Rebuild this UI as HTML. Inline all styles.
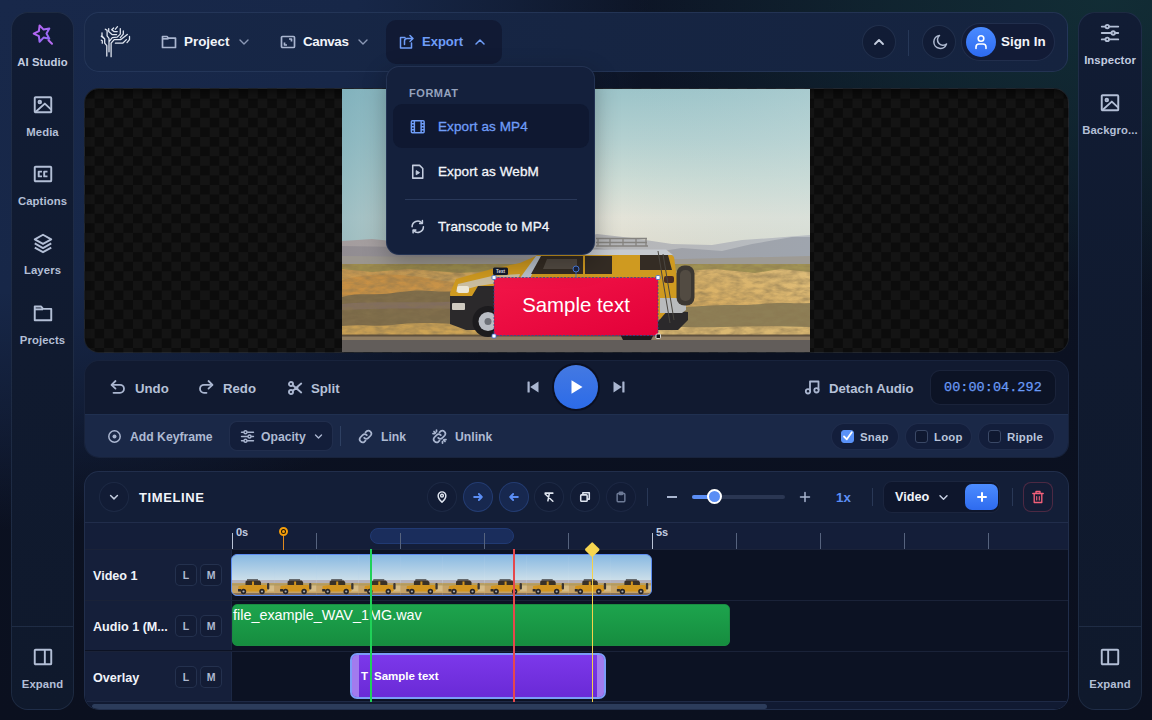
<!DOCTYPE html>
<html lang="en">
<head>
<meta charset="utf-8">
<title>Video Editor</title>
<style>
*{box-sizing:border-box;margin:0;padding:0}
html,body{width:1152px;height:720px;overflow:hidden}
body{font-family:"Liberation Sans",sans-serif;font-weight:700;color:#e6ebf5;position:relative;
background:
 radial-gradient(ellipse 470px 300px at 96% 0%,rgba(18,46,54,.95) 0%,rgba(18,46,54,.6) 45%,rgba(18,46,54,0) 100%),
 radial-gradient(ellipse 650px 530px at 0% 0%,#18284a 0%,#172748 55%,rgba(23,39,72,.55) 78%,rgba(23,39,72,0) 100%),
 linear-gradient(180deg,#0d1526 0%,#0b1121 50%,#0b101f 100%);}
.abs{position:absolute}
.panel{position:absolute;border:1px solid rgba(120,150,200,.14);border-radius:15px}
svg{display:block}
/* sidebars */
.side{background:linear-gradient(180deg,#111c34 0%,#101a2f 50%,#0f192c 100%);left:11px;top:12px;width:63px;height:698px;border-radius:17px}
.side.r{left:1078px;width:64px}
.side.r .sitem{width:62px}
.sitem{position:absolute;left:0;width:61px;text-align:center;font-size:11.3px;color:#b3bfd6;letter-spacing:.1px}
.sitem svg{margin:0 auto 10px}
.sdiv{position:absolute;left:0;right:0;top:613px;height:1px;background:rgba(120,150,200,.16)}
/* header */
#hdr{left:84px;top:12px;width:984px;height:60px;background:linear-gradient(90deg,#172747,#15233f)}
.mbtn{position:absolute;top:7px;height:44px;border-radius:10px;font-size:13.4px;color:#f1f4fa;display:flex;align-items:center}
.circ{position:absolute;border-radius:50%;border:1px solid rgba(130,160,210,.14);background:rgba(14,22,44,.55)}
/* dropdown */
#dd{left:386px;top:66px;width:209px;height:189px;background:#14203c;border-radius:13px;border:1px solid rgba(120,150,200,.16);box-shadow:0 8px 24px rgba(0,0,0,.3)}
.ddi{position:absolute;left:6px;width:196px;height:44px;border-radius:9px;font-size:13.5px;font-weight:400;color:#f3f5fa}
.ddi span{position:absolute;left:45px;top:15px;letter-spacing:.1px;-webkit-text-stroke:.3px currentColor}
.ddi svg{position:absolute;left:17px;top:14.500px;width:15.500px;height:15.500px}
/* canvas */
#cv{left:84px;top:88px;width:985px;height:265px;overflow:hidden;border-radius:15px;
 background:repeating-conic-gradient(#141414 0% 25%,#0c0c0c 0% 50%) 0 0/19.2px 19.2px;box-shadow:inset 0 6px 8px -4px rgba(0,0,0,.6)}
/* controls */
#ctl{left:84px;top:360px;width:985px;height:98px;background:#111a30;overflow:hidden;border-color:rgba(120,150,200,.08)}
#ctl2{position:absolute;left:0;right:0;top:53px;bottom:0;background:#1a2847;border-top:1px solid rgba(120,150,200,.07)}
.tb{position:absolute;margin-top:1.5px;font-size:13.2px;color:#b6c1d8;white-space:nowrap}
.tb2{position:absolute;margin-top:.5px;font-size:12.2px;color:#aebad2;white-space:nowrap}
.pill{position:absolute;height:27px;border-radius:14px;background:#131e3b;border:1px solid rgba(120,150,200,.12);font-size:11.4px;color:#b9c4da}
.pill i{position:absolute;left:9px;top:6px;width:13px;height:13px;border-radius:3px;border:1.5px solid #3a4866;background:#0f1830}
.pill span{position:absolute;left:28px;top:6.500px;letter-spacing:.2px}
/* timeline */
#tl{left:84px;top:471px;width:985px;height:239px;background:#131e37;overflow:hidden}
.tc{position:absolute;width:30px;height:30px;border-radius:50%;border:1px solid rgba(130,160,210,.1);background:#121c35;top:10px}
.tc svg{position:absolute;left:8px;top:8px;width:12px;height:12px}
.trk{position:absolute;left:0;width:985px;border-top:1px solid rgba(120,150,200,.13)}
.trkh{position:absolute;left:0;top:0;width:147px;height:100%;background:#151f3a;border-right:1px solid rgba(120,150,200,.08)}
.trkh b{position:absolute;left:8px;top:19px;font-size:12.6px;color:#f0f3f9;white-space:nowrap}
.lm{position:absolute;top:14px;width:22px;height:22px;border-radius:5px;border:1px solid rgba(130,160,210,.16);background:#131c35;font-size:10.5px;color:#aeb9d0;text-align:center;line-height:20px}
.tick{position:absolute;top:64px;width:1px;height:14px;background:#5d6b86}
</style>
</head>
<body>

<!-- LEFT SIDEBAR -->
<div class="panel side" id="ls">
  <div class="sitem" style="top:11px;color:#c3cde0">
    <svg width="22" height="22" viewBox="0 0 22 22" fill="none" stroke-width="2" stroke-linecap="round" stroke-linejoin="round"><defs><linearGradient id="stg" x1="0" y1="0" x2="1" y2="1"><stop offset="0" stop-color="#c264f2"/><stop offset="1" stop-color="#8a6cf7"/></linearGradient></defs><path d="M7.6 1.4 11.6 5.6 17.3 4.5 14.5 9.6 17.3 14.7 11.6 13.6 7.6 17.8 6.9 12.1 1.7 9.6 6.9 7.1z" stroke="url(#stg)"/><path d="M16.500 16.200l3.500 3.600" stroke="#b56bf0"/></svg>
    AI Studio</div>
  <div class="sitem" style="top:81px">
    <svg width="22" height="22" viewBox="0 0 24 24" fill="none" stroke="#b3bfd6" stroke-width="2.100" stroke-linejoin="round"><rect x="3" y="3.500" width="18" height="16.500" rx="1"/><circle cx="8.500" cy="8.800" r="1.400"/><path d="M3.800 19.600 14 10.500l7 6.500"/></svg>
    Media</div>
  <div class="sitem" style="top:150px">
    <svg width="22" height="22" viewBox="0 0 24 24" fill="none" stroke="#b3bfd6" stroke-width="2.100"><rect x="3" y="4" width="18" height="16" rx="1"/><path d="M10.900 9.400H7.300v5.200h3.600M16.900 9.400h-3.600v5.200h3.600" stroke-linejoin="round"/></svg>
    Captions</div>
  <div class="sitem" style="top:219px">
    <svg width="22" height="22" viewBox="0 0 24 24" fill="none" stroke="#b3bfd6" stroke-width="2.100" stroke-linejoin="round"><path d="M12 3l9 5-9 5-9-5z"/><path d="M3 12.500l9 5 9-5"/><path d="M3 17l9 5 9-5"/></svg>
    Layers</div>
  <div class="sitem" style="top:289px">
    <svg width="22" height="22" viewBox="0 0 24 24" fill="none" stroke="#b3bfd6" stroke-width="2.100" stroke-linejoin="round"><path d="M3 5h7l2 2.500h9v12.500h-18z"/><path d="M3 8h9"/></svg>
    Projects</div>
  <div class="sdiv"></div>
  <div class="sitem" style="top:633px">
    <svg width="22" height="22" viewBox="0 0 24 24" fill="none" stroke="#b3bfd6" stroke-width="2.100"><rect x="3" y="4" width="18" height="16" rx="1"/><path d="M14 4v16"/></svg>
    Expand</div>
</div>

<!-- RIGHT SIDEBAR -->
<div class="panel side r" id="rs">
  <div class="sitem" style="top:9px;color:#c3cde0">
    <svg width="22" height="22" viewBox="0 0 24 24" fill="none" stroke="#b3bfd6" stroke-width="2" stroke-linecap="round"><path d="M3 5h18M3 12h18M3 19h18"/><circle cx="9" cy="5" r="1.900" fill="#111a31"/><circle cx="15.500" cy="12" r="1.900" fill="#111a31"/><circle cx="9" cy="19" r="1.900" fill="#111a31"/></svg>
    Inspector</div>
  <div class="sitem" style="top:79px">
    <svg width="22" height="22" viewBox="0 0 24 24" fill="none" stroke="#b3bfd6" stroke-width="2.100" stroke-linejoin="round"><rect x="3" y="3.500" width="18" height="16.500" rx="1"/><circle cx="8.500" cy="8.800" r="1.400"/><path d="M3.800 19.600 14 10.500l7 6.500"/></svg>
    Backgro...</div>
  <div class="sdiv"></div>
  <div class="sitem" style="top:633px">
    <svg width="22" height="22" viewBox="0 0 24 24" fill="none" stroke="#b3bfd6" stroke-width="2.100"><rect x="3" y="4" width="18" height="16" rx="1"/><path d="M10 4v16"/></svg>
    Expand</div>
</div>

<!-- HEADER -->
<div class="panel" id="hdr">

  <svg class="abs" style="left:9px;top:7px" width="44" height="44" viewBox="0 0 44 44" fill="none" stroke="#dde3ee" stroke-width="1.300" stroke-linecap="round" stroke-linejoin="round">
    <path d="M12.800 36V25.700L10.700 23.200V19L8 15.900V12.800M15 31.800V18.300L13.100 15.900V10.400L11.300 9.200M17.100 36.700V23.200L20.200 19.600H26.900L33.300 14.400M15.300 21.400 18.300 17.700 23.200 17.100 26.300 14.100V8.600M21.400 23.200H28.700L32.400 19.600M33 22.600 35.500 19.600V16.500M14.700 8.600V11.600L18.300 14.700H22.600M19.600 8 17.700 9.800 20.200 11.600H23.200M21.400 9.200 23.500 6.700M26.300 17.700 29.300 14.100V11M7.300 20.200 8.300 20.800V23.200M7.300 16.200 9.800 18.300"/>
  </svg>
  <div class="mbtn" style="left:66px;width:110px">
    <svg class="abs" style="left:10px;top:14px" width="16" height="16" viewBox="0 0 16 16" fill="none" stroke="#aab6d0" stroke-width="1.700" stroke-linejoin="round"><path d="M1.500 2.500h4.500l1.500 1.700h7v9.300h-13z"/><path d="M1.500 4.800h6"/></svg>
    <span class="abs" style="left:33px;top:14px">Project</span>
    <svg class="abs" style="left:88px;top:17px" width="10" height="10" viewBox="0 0 10 10" fill="none" stroke="#8b98b5" stroke-width="1.400" stroke-linecap="round" stroke-linejoin="round"><path d="M1 3l4 4 4-4"/></svg>
  </div>
  <div class="mbtn" style="left:185px;width:110px">
    <svg class="abs" style="left:10px;top:14px" width="16" height="16" viewBox="0 0 16 16" fill="none" stroke="#aab6d0" stroke-width="1.700" stroke-linejoin="round"><rect x="1.500" y="2.500" width="13" height="11" rx="1"/><path d="M4.500 8.500v2.500h2.500M11.500 7.500V5h-2.500"/></svg>
    <span class="abs" style="left:33px;top:14px;letter-spacing:-.35px">Canvas</span>
    <svg class="abs" style="left:88px;top:17px" width="10" height="10" viewBox="0 0 10 10" fill="none" stroke="#8b98b5" stroke-width="1.400" stroke-linecap="round" stroke-linejoin="round"><path d="M1 3l4 4 4-4"/></svg>
  </div>
  <div class="mbtn" style="left:301px;width:116px;background:#111a34;color:#6f9df8">
    <svg class="abs" style="left:12px;top:13px" width="17" height="17" viewBox="0 0 17 17" fill="none" stroke="#6f9df8" stroke-width="1.500" stroke-linejoin="round" stroke-linecap="round"><path d="M7 4.500H2.500v10.500h11v-5"/><path d="M6.500 11.500V8a2.500 2.500 0 0 1 2.500-2.500h5.500M12 2.500l3 3-3 3"/></svg>
    <span class="abs" style="left:36px;top:14px;font-size:13px">Export</span>
    <svg class="abs" style="left:89px;top:17px" width="10" height="10" viewBox="0 0 10 10" fill="none" stroke="#6f9df8" stroke-width="1.500" stroke-linecap="round" stroke-linejoin="round"><path d="M1 7l4-4 4 4"/></svg>
  </div>
  <div class="circ" style="left:777px;top:12px;width:34px;height:34px"><svg class="abs" style="left:10px;top:10px" width="12" height="12" viewBox="0 0 12 12" fill="none" stroke="#c5cee0" stroke-width="1.800" stroke-linecap="round" stroke-linejoin="round"><path d="M2 8l4-4 4 4"/></svg></div>
  <div class="abs" style="left:823px;top:17px;width:1px;height:26px;background:rgba(130,160,210,.16)"></div>
  <div class="circ" style="left:837px;top:12px;width:34px;height:34px"><svg class="abs" style="left:9px;top:8px" width="16" height="16" viewBox="0 0 16 16" fill="none" stroke="#aeb9d0" stroke-width="1.500" stroke-linejoin="round"><path d="M7.500 1.500a6.500 6.500 0 1 0 7 8.500 5.200 5.200 0 0 1-7-8.500z"/></svg></div>
  <div class="abs" style="left:876px;top:10px;width:94px;height:38px;border-radius:19px;background:#121b36;border:1px solid rgba(130,160,210,.14)">
    <div class="abs" style="left:4px;top:3px;width:30px;height:30px;border-radius:50%;background:linear-gradient(180deg,#4a8bff,#2d6af0)"></div>
    <svg class="abs" style="left:11px;top:9px" width="16" height="18" viewBox="0 0 16 18" fill="none" stroke="#fff" stroke-width="1.600" stroke-linejoin="round" stroke-linecap="round"><circle cx="8" cy="5.500" r="2.800"/><path d="M3 15.500v-1.500a3 3 0 0 1 3-3h4a3 3 0 0 1 3 3v1.500"/></svg>
    <span class="abs" style="left:39px;top:10px;font-size:13.4px;color:#f1f4fa">Sign In</span>
  </div>
</div>

<!-- CANVAS -->
<div class="panel" id="cv">

  <svg class="abs" style="left:257px;top:-1px" width="468" height="266" viewBox="0 0 468 266">
    <defs>
      <linearGradient id="sky" x1="0" y1="0" x2="0" y2="1"><stop offset="0" stop-color="#9cc4c9"/><stop offset=".28" stop-color="#b3d0d0"/><stop offset=".52" stop-color="#cddcd5"/><stop offset=".72" stop-color="#e3e3d8"/><stop offset="1" stop-color="#dcd8c9"/></linearGradient>
      <linearGradient id="skyx" x1="0" y1="0" x2="1" y2="0"><stop offset="0" stop-color="#6fa5b4" stop-opacity=".6"/><stop offset=".4" stop-color="#8fbcc6" stop-opacity=".1"/><stop offset=".6" stop-color="#a5c8d0" stop-opacity="0"/><stop offset="1" stop-color="#c4dadc" stop-opacity=".3"/></linearGradient>
      <linearGradient id="gnd" x1="0" y1="0" x2="0" y2="1"><stop offset="0" stop-color="#d0b171"/><stop offset=".3" stop-color="#dbb469"/><stop offset=".55" stop-color="#d1a65b"/><stop offset="1" stop-color="#b59555"/></linearGradient>
      <linearGradient id="gndx" x1="0" y1="0" x2="1" y2="0"><stop offset="0" stop-color="#b9782c" stop-opacity=".45"/><stop offset=".5" stop-color="#c8913f" stop-opacity=".15"/><stop offset="1" stop-color="#e6c684" stop-opacity=".45"/></linearGradient>
      <linearGradient id="red" x1="0" y1="0" x2="1" y2="1"><stop offset="0" stop-color="#f21648"/><stop offset="1" stop-color="#e30039"/></linearGradient>
      <filter id="nz" x="0" y="0" width="100%" height="100%"><feTurbulence type="fractalNoise" baseFrequency=".09 .22" numOctaves="3" seed="7"/><feColorMatrix values="0 0 0 0 .25  0 0 0 0 .18  0 0 0 0 .08  .9 .9 .9 0 -1.050"/></filter>
      <filter id="nz2" x="0" y="0" width="100%" height="100%"><feTurbulence type="fractalNoise" baseFrequency=".06 .3" numOctaves="2" seed="3"/><feColorMatrix values="0 0 0 0 .95  0 0 0 0 .82  0 0 0 0 .55  .8 .8 .8 0 -1"/></filter>
    </defs>
    <rect width="468" height="180" fill="url(#sky)"/>
    <rect width="468" height="160" fill="url(#skyx)"/>
    <!-- mountains -->
    <linearGradient id="mt1" x1="0" y1="0" x2="1" y2="0"><stop offset="0" stop-color="#a39c9d"/><stop offset=".45" stop-color="#b3b2b3"/><stop offset="1" stop-color="#b9bec3"/></linearGradient>
    <linearGradient id="mt2" x1="0" y1="0" x2="1" y2="0"><stop offset="0" stop-color="#918c91"/><stop offset=".45" stop-color="#a09fa3"/><stop offset="1" stop-color="#9fa5ae"/></linearGradient>
    <path d="M0 153 30 151 60 154 100 155 140 158 200 159 255 146 290 150 330 156 370 157 400 152 430 150 468 147V180H0z" fill="url(#mt1)"/>
    <path d="M0 158 60 159 130 163 200 166 255 160 300 166 340 160 380 163 410 156 450 149 468 149V182H0z" fill="url(#mt2)"/>
    <path d="M0 168 100 169 250 172 340 171 468 168V182H0z" fill="#9d988f" opacity=".8"/>
    <!-- ground -->
    <rect y="176" width="468" height="90" fill="url(#gnd)"/>
    <rect y="176" width="468" height="74" fill="url(#gndx)"/>
    <path d="M0 176h468v8l-30-3-25 4-40-4-45 3-40-3-60 4-50-4-60 4-50-4-38 3-30-3z" fill="#938b4c" opacity=".8"/>
    <path d="M0 192c30-8 60-6 90-1s50 8 80 4 40-8 60-4v22H0z" fill="#c4853a" opacity=".5"/>
    <path d="M0 209c12-4 25-2 40-3s30-5 50-3 35-2 50 1 40 0 60 4 30 5 50 6v28H0z" fill="#776749" opacity=".95"/>
    <path d="M0 216c30-3 60-1 100-2s70 3 120 5v5c-60-3-150-5-220-2z" fill="#8d7286" opacity=".35"/>
    <path d="M300 222c20-4 40-2 60-4s40 0 60-2 30 0 48-1v26H300z" fill="#8a7c55" opacity=".95"/>
    <path d="M0 238c20-2 35 1 50-1s35-3 60-1 50 0 70 1 40 1 60 3v9H0z" fill="#cfa556" opacity=".9"/>
    <path d="M300 240c30-2 50 0 80-1s60-1 88 0v10H300z" fill="#dab873" opacity=".95"/>
    <rect y="176" width="468" height="74" filter="url(#nz)" opacity=".7"/>
    <rect y="247.500" width="468" height="6" fill="#8f7d63"/>
    <rect y="252" width="468" height="14" fill="#625d5a"/>
    <rect y="246.500" width="468" height="2" fill="#4d4234" opacity=".8"/>
    <!-- car -->
    <g>
      <path d="M254 150.500h51M254 154.500h51M254 158h52M256 150.500v8M268 150.500v8M281 150.500v8M294 150.500v8M304 150.500v8" stroke="#85837f" stroke-width="1.300" fill="none"/>
      <path d="M194 168l4-5h128l6 6 3 22 1 34-8 6H124l-14-4-2-22 6-14 36-10 28-6z" fill="#cf9a20"/>
      <path d="M196 164.500l4-3h124l7 5.500H194z" fill="#c6cacf"/>
      <path d="M178 190l16-22h6l-12 22z" fill="#b9c2cc"/>
      <path d="M199 168h42v18h-52zM243 168h27v18h-27zM298 167h28l4 15h-32z" fill="#342c24"/>
      <path d="M205 171h30v10h-34z" fill="#6d665c" opacity=".55"/>
      <path d="M116 196l34-8 28-2-2 6-40 6-22 6z" fill="#c9c7c0" opacity=".8"/>
      <path d="M108 208h22l6-10h20l-2 12 10 26h150l12-14 20 2v8l-10 10H124l-16-6z" fill="#2b292b"/>
      <path d="M318 210h26v12l-4 3h-22z" fill="#b9bbbd"/>
      <rect x="334.500" y="177.500" width="18" height="40" rx="8" fill="#3c3732"/>
      <rect x="338" y="182" width="11" height="31" rx="5" fill="#524b42"/>
      <circle cx="146" cy="233.500" r="15.500" fill="#1c1b1e"/><circle cx="146" cy="233.500" r="9.500" fill="#b9bdc4"/><circle cx="146" cy="233.500" r="3.500" fill="#6d7178"/>
      <path d="M279 248a16 16 0 0 1 32 0l-2 4h-28z" fill="#1c1b1e"/>
      <rect x="115" y="198" width="12" height="7" rx="2" fill="#ece7d6"/>
      <rect x="110" y="215" width="13" height="7" rx="1" fill="#cfcac0"/>
      <rect x="322" y="188" width="10" height="7" rx="2" fill="#4a2c22"/>
      <path d="M316 163l12 72M321 166l11 66" stroke="#4a4640" stroke-width="1" fill="none"/>
    </g>
    <!-- text overlay -->
    <rect x="152" y="189.500" width="164" height="58" fill="url(#red)"/>
    <rect x="152" y="189.500" width="164" height="58" fill="none" stroke="#2f4f8f" stroke-width=".8" stroke-dasharray="2 1.500"/>
    <text x="234" y="223.700" text-anchor="middle" font-family="Liberation Sans, sans-serif" font-weight="400" font-size="20.400" fill="#ffffff">Sample text</text>
    <rect x="151" y="179.500" width="15" height="7.500" rx="1.500" fill="#141a2c"/>
    <text x="158.500" y="185.300" text-anchor="middle" font-family="Liberation Sans, sans-serif" font-weight="700" font-size="4.500" fill="#e8ecf5">Text</text>
    <path d="M234 184v6" stroke="#3b6ad0" stroke-width=".8"/>
    <circle cx="234" cy="181" r="3" fill="#1a2440" stroke="#4d7fe0" stroke-width="1"/>
    <g fill="#fff" stroke="#3b6ad0" stroke-width=".8"><rect x="150" y="187.500" width="4" height="4" rx="1"/><rect x="314" y="187.500" width="4" height="4" rx="1"/><rect x="150" y="246" width="4" height="4" rx="1"/></g>
    <rect x="314" y="246" width="4.500" height="4.500" rx="1" fill="#111" stroke="#fff" stroke-width=".8"/>
  </svg>
</div>

<!-- DROPDOWN -->
<div class="abs" id="dd">

  <div class="abs" style="left:22px;top:20px;font-size:11px;letter-spacing:.55px;color:#95a2bd">FORMAT</div>
  <div class="ddi" style="top:37px;background:#0f1831;color:#6f9df8">
    <svg width="17" height="17" viewBox="0 0 17 17" fill="none" stroke="#6f9df8" stroke-width="1.600"><rect x="1.500" y="2" width="14" height="13" rx="1"/><path d="M4.800 2v13M12.200 2v13M1.500 5.300h3.300M1.500 8.500h3.300M1.500 11.700h3.300M12.200 5.300h3.300M12.200 8.500h3.300M12.200 11.700h3.300"/></svg>
    <span>Export as MP4</span>
  </div>
  <div class="ddi" style="top:82px">
    <svg width="17" height="17" viewBox="0 0 17 17" fill="none" stroke="#c3ccde" stroke-width="1.700" stroke-linejoin="round"><path d="M3 1.500h7.500l3.500 3.500v10.500h-11z"/><path d="M6.800 7.200v4.600l3.700-2.300z" fill="#c3ccde" stroke-width="1"/></svg>
    <span>Export as WebM</span>
  </div>
  <div class="abs" style="left:18px;top:132px;width:172px;height:1px;background:rgba(130,160,210,.2)"></div>
  <div class="ddi" style="top:137px">
    <svg width="17" height="17" viewBox="0 0 17 17" fill="none" stroke="#c3ccde" stroke-width="1.700" stroke-linecap="round" stroke-linejoin="round"><path d="M2.300 8.500a6.200 6.200 0 0 1 10.800-4.200M14.700 8.500a6.200 6.200 0 0 1-10.800 4.200"/><path d="M13.600 1.800v3h-3M3.400 15.200v-3h3"/></svg>
    <span>Transcode to MP4</span>
  </div>
</div>

<!-- CONTROLS -->
<div class="panel" id="ctl">
  <div id="ctl2"></div>

  <svg class="abs" style="left:24px;top:17px" width="18" height="18" viewBox="0 0 18 18" fill="none" stroke="#aab6d0" stroke-width="1.800" stroke-linecap="round" stroke-linejoin="round"><path d="M6.500 3l-4 3.800 4 3.800"/><path d="M3 6.800h8a4 4 0 0 1 0 8h-6.500"/></svg>
  <div class="tb" style="left:50px;top:18px">Undo</div>
  <svg class="abs" style="left:112px;top:17px" width="18" height="18" viewBox="0 0 18 18" fill="none" stroke="#aab6d0" stroke-width="1.800" stroke-linecap="round" stroke-linejoin="round"><path d="M11.500 3l4 3.800-4 3.800"/><path d="M15 6.800h-8a4 4 0 0 0 0 8h2.500"/></svg>
  <div class="tb" style="left:138px;top:18px">Redo</div>
  <svg class="abs" style="left:202px;top:19px" width="16" height="16" viewBox="0 0 18 18" fill="none" stroke="#aab6d0" stroke-width="2.100" stroke-linecap="round"><circle cx="4.500" cy="4.500" r="2.300"/><circle cx="4.500" cy="13.500" r="2.300"/><path d="M6.500 6l9.500 8M6.500 12l9.500-8M9 9h3"/></svg>
  <div class="tb" style="left:226px;top:18px">Split</div>

  <svg class="abs" style="left:441px;top:19px" width="14" height="14" viewBox="0 0 14 14" fill="#aab6d0"><rect x="1.500" y="1.500" width="2.200" height="11" rx=".5"/><path d="M12.500 1.500v11l-8.300-5.500z"/></svg>
  <div class="abs" style="left:469px;top:4px;width:44px;height:44px;border-radius:50%;background:linear-gradient(180deg,#4479e2,#2c6be8);box-shadow:0 0 0 2px rgba(8,12,26,.7)"></div>
  <svg class="abs" style="left:484px;top:18px" width="16" height="16" viewBox="0 0 16 16" fill="#fff"><path d="M2.500 1.300v13.400l11-6.700z"/></svg>
  <svg class="abs" style="left:527px;top:19px" width="14" height="14" viewBox="0 0 14 14" fill="#aab6d0"><rect x="10.300" y="1.500" width="2.200" height="11" rx=".5"/><path d="M1.500 1.500v11l8.300-5.500z"/></svg>

  <svg class="abs" style="left:719px;top:17px" width="17" height="18" viewBox="0 0 17 18" fill="none" stroke="#aab6d0" stroke-width="1.800" stroke-linejoin="round"><path d="M6 13V3.500h8.500V12"/><circle cx="4" cy="13.300" r="2.200"/><circle cx="12.500" cy="12.300" r="2.200"/></svg>
  <div class="tb" style="left:744px;top:18px">Detach Audio</div>
  <div class="abs" style="left:845px;top:9px;width:126px;height:35px;border-radius:10px;background:#0c1325;border:1px solid rgba(120,150,200,.13)">
    <span class="abs" style="left:13px;top:9px;font-family:'Liberation Mono',monospace;font-weight:400;font-size:13.500px;color:#6a9af6;letter-spacing:.05px;-webkit-text-stroke:.25px #6a9af6">00:00:04.292</span>
  </div>

  <svg class="abs" style="left:22px;top:68px" width="15" height="15" viewBox="0 0 15 15" fill="none" stroke="#aab6d0" stroke-width="1.500"><circle cx="7.500" cy="7.500" r="5.700"/><circle cx="7.500" cy="7.500" r="2" fill="#aab6d0" stroke="none"/></svg>
  <div class="tb2" style="left:45px;top:68px">Add Keyframe</div>
  <div class="abs" style="left:144px;top:60px;width:104px;height:30px;border-radius:8px;background:#131e3a;border:1px solid rgba(120,150,200,.14)"></div>
  <svg class="abs" style="left:155px;top:68px" width="15" height="15" viewBox="0 0 15 15" fill="none" stroke="#aab6d0" stroke-width="1.400" stroke-linecap="round"><path d="M1.500 3.200h12M1.500 7.500h12M1.500 11.800h12"/><circle cx="5.500" cy="3.200" r="1.500" fill="#131e3a"/><circle cx="9.500" cy="7.500" r="1.500" fill="#131e3a"/><circle cx="5.500" cy="11.800" r="1.500" fill="#131e3a"/></svg>
  <div class="tb2" style="left:176px;top:68px">Opacity</div>
  <svg class="abs" style="left:229px;top:71px" width="9" height="9" viewBox="0 0 9 9" fill="none" stroke="#aab6d0" stroke-width="1.400" stroke-linecap="round" stroke-linejoin="round"><path d="M1.500 3l3 3 3-3"/></svg>
  <div class="abs" style="left:255px;top:65px;width:1px;height:20px;background:rgba(130,160,210,.2)"></div>
  <svg class="abs" style="left:273px;top:68px" width="15" height="15" viewBox="0 0 15 15" fill="none" stroke="#aab6d0" stroke-width="1.750" stroke-linecap="round"><path d="M6.200 8.800a3 3 0 0 0 4.200 0l2.300-2.300a3 3 0 0 0-4.200-4.200l-1 1"/><path d="M8.800 6.200a3 3 0 0 0-4.200 0l-2.300 2.300a3 3 0 0 0 4.200 4.200l1-1"/></svg>
  <div class="tb2" style="left:296px;top:68px">Link</div>
  <svg class="abs" style="left:347px;top:68px" width="15" height="15" viewBox="0 0 15 15" fill="none" stroke="#aab6d0" stroke-width="1.750" stroke-linecap="round"><path d="M6.200 8.800a3 3 0 0 0 4.200 0l2.300-2.300a3 3 0 0 0-4.200-4.200l-1 1"/><path d="M8.800 6.200a3 3 0 0 0-4.200 0l-2.300 2.300a3 3 0 0 0 4.200 4.200l1-1"/><path d="M2 2.500l1.500 1.500M13 12.500l-1.500-1.500M4.500 1v1.500M1 4.500h1.500M10.500 14v-1.500M14 10.500h-1.500"/></svg>
  <div class="tb2" style="left:370px;top:68px">Unlink</div>

  <div class="pill" style="left:746px;top:62px;width:68px"><i style="background:#5a92f8;border-color:#5a92f8"></i><svg class="abs" style="left:10px;top:6px" width="12" height="12" viewBox="0 0 12 12" fill="none" stroke="#fff" stroke-width="1.800" stroke-linecap="round" stroke-linejoin="round"><path d="M2 6.500l2.800 2.800 5-7"/></svg><span>Snap</span></div>
  <div class="pill" style="left:820px;top:62px;width:67px"><i></i><span>Loop</span></div>
  <div class="pill" style="left:893px;top:62px;width:77px"><i></i><span>Ripple</span></div>
</div>

<!-- TIMELINE -->
<div class="panel" id="tl">

  <!-- header row -->
  <div class="tc" style="left:14px"><svg width="14" height="14" viewBox="0 0 14 14" fill="none" stroke="#c5cee0" stroke-width="1.700" stroke-linecap="round" stroke-linejoin="round"><path d="M3 5.200l4 4 4-4"/></svg></div>
  <div class="abs" style="left:54px;top:18px;font-size:13px;letter-spacing:.6px;color:#f1f4fa">TIMELINE</div>

  <div class="tc" style="left:342px"><svg width="14" height="14" viewBox="0 0 14 14" fill="none" stroke="#dfe5f0" stroke-width="1.700" stroke-linejoin="round"><path d="M7 13s4.500-4 4.500-7.500a4.500 4.500 0 0 0-9 0c0 3.500 4.500 7.500 4.500 7.500z"/><circle cx="7" cy="5.500" r="1.600"/></svg></div>
  <div class="tc" style="left:378px;background:#17284f;border-color:rgba(80,130,240,.22)"><svg width="14" height="14" viewBox="0 0 14 14" fill="none" stroke="#5b8ef5" stroke-width="2.200" stroke-linecap="round" stroke-linejoin="round"><path d="M2.500 7h9M8 3.500l3.500 3.500-3.500 3.500"/></svg></div>
  <div class="tc" style="left:414px;background:#17284f;border-color:rgba(80,130,240,.22)"><svg width="14" height="14" viewBox="0 0 14 14" fill="none" stroke="#5b8ef5" stroke-width="2.200" stroke-linecap="round" stroke-linejoin="round"><path d="M11.500 7h-9M6 3.500l-3.500 3.500 3.500 3.500"/></svg></div>
  <div class="tc" style="left:449px"><svg width="14" height="14" viewBox="0 0 14 14" fill="none" stroke="#dfe5f0" stroke-width="1.800" stroke-linecap="round" stroke-linejoin="round"><path d="M2.500 2.500h9M7.500 2.500l-1.800 9M2.500 3.500l9 8.500"/></svg></div>
  <div class="tc" style="left:485px"><svg width="14" height="14" viewBox="0 0 14 14" fill="none" stroke="#dfe5f0" stroke-width="1.800" stroke-linejoin="round"><rect x="2" y="4.500" width="7.500" height="7.500" rx="1"/><path d="M4.500 4.500v-2.500h7.500v7.500h-2.500"/></svg></div>
  <div class="tc" style="left:521px;border-color:rgba(130,160,210,.09)"><svg width="14" height="14" viewBox="0 0 14 14" fill="none" stroke="#6d7a96" stroke-width="1.700" stroke-linejoin="round"><rect x="2.500" y="3" width="9" height="9.500" rx="1"/><rect x="5" y="1.500" width="4" height="2.500" rx=".5" fill="#6d7a96"/></svg></div>
  <div class="abs" style="left:562px;top:16px;width:1px;height:18px;background:rgba(130,160,210,.2)"></div>
  <div class="abs" style="left:582px;top:24px;width:10px;height:1.500px;background:#aab6d0"></div>
  <div class="abs" style="left:607px;top:23px;width:93px;height:4px;border-radius:2px;background:#2a3652"></div>
  <div class="abs" style="left:607px;top:23px;width:22px;height:4px;border-radius:2px;background:#5b8ef5"></div>
  <div class="abs" style="left:622px;top:17px;width:15px;height:15px;border-radius:50%;background:#5b8ef5;border:2px solid #fff"></div>
  <svg class="abs" style="left:714px;top:19px" width="12" height="12" viewBox="0 0 12 12" stroke="#aab6d0" stroke-width="1.500" stroke-linecap="round"><path d="M1.500 6h9M6 1.500v9"/></svg>
  <div class="abs" style="left:751px;top:17px;font-size:13.300px;font-weight:700;color:#5b8ef5;margin-top:.5px">1x</div>
  <div class="abs" style="left:787px;top:16px;width:1px;height:18px;background:rgba(130,160,210,.2)"></div>
  <div class="abs" style="left:798px;top:9px;width:117px;height:32px;border-radius:9px;background:#0e162c;border:1px solid rgba(120,150,200,.12)"></div>
  <div class="abs" style="left:810px;top:17px;font-size:12.700px;font-weight:700;color:#f1f4fa;margin-top:.5px">Video</div>
  <svg class="abs" style="left:853px;top:20px" width="11" height="11" viewBox="0 0 11 11" fill="none" stroke="#c5cee0" stroke-width="1.500" stroke-linecap="round" stroke-linejoin="round"><path d="M2 3.800l3.500 3.500 3.500-3.500"/></svg>
  <div class="abs" style="left:880px;top:12px;width:33px;height:26px;border-radius:7px;background:linear-gradient(180deg,#4c8cff,#2e6bef)"></div>
  <svg class="abs" style="left:891px;top:19px" width="12" height="12" viewBox="0 0 12 12" stroke="#fff" stroke-width="2" stroke-linecap="round"><path d="M2 6h8M6 2v8"/></svg>
  <div class="abs" style="left:927px;top:16px;width:1px;height:18px;background:rgba(130,160,210,.2)"></div>
  <div class="abs" style="left:938px;top:10px;width:30px;height:30px;border-radius:8px;border:1px solid rgba(240,80,110,.26);background:#141c35"></div>
  <svg class="abs" style="left:946px;top:17px" width="14" height="16" viewBox="0 0 14 16" fill="none" stroke="#f4607a" stroke-width="1.350" stroke-linejoin="round" stroke-linecap="round"><path d="M1.800 4.500h10.400M5 4.500v-2h4v2M3.200 4.500v9h7.600v-9"/><path d="M5.700 7.500v3.500M8.300 7.500v3.500" stroke-width="1.100"/></svg>

  <!-- ruler -->
  <div class="abs" style="left:0;top:50px;width:985px;height:28px;background:#141e39;border-top:1px solid rgba(120,150,200,.13)"></div>
  <div class="abs" style="left:285px;top:56px;width:144px;height:16px;border-radius:8px;background:#1a2d5c;border:1px solid #213a73"></div>
  <div class="abs" style="left:147px;top:61px;width:1px;height:17px;background:#b8c2d6"></div><div class="abs" style="left:231px;top:61px;width:1px;height:17px;background:#56637e"></div><div class="abs" style="left:315px;top:61px;width:1px;height:17px;background:#56637e"></div><div class="abs" style="left:399px;top:61px;width:1px;height:17px;background:#56637e"></div><div class="abs" style="left:483px;top:61px;width:1px;height:17px;background:#56637e"></div><div class="abs" style="left:567px;top:61px;width:1px;height:17px;background:#b8c2d6"></div><div class="abs" style="left:651px;top:61px;width:1px;height:17px;background:#56637e"></div><div class="abs" style="left:735px;top:61px;width:1px;height:17px;background:#56637e"></div><div class="abs" style="left:819px;top:61px;width:1px;height:17px;background:#56637e"></div><div class="abs" style="left:903px;top:61px;width:1px;height:17px;background:#56637e"></div>
  <div class="abs" style="left:151px;top:54px;font-size:11px;font-weight:700;color:#c3cde0">0s</div>
  <div class="abs" style="left:571px;top:54px;font-size:11px;font-weight:700;color:#c3cde0">5s</div>

  <!-- tracks bg -->
  <div class="abs" style="left:0;top:77px;width:985px;height:160px;background:#0c1223"></div>
  <div class="trk" style="top:77px;height:51px"><div class="trkh"><b>Video 1</b><span class="lm" style="left:90px">L</span><span class="lm" style="left:115px">M</span></div></div>
  <div class="trk" style="top:128px;height:50px"><div class="trkh"><b>Audio 1 (M...</b><span class="lm" style="left:90px">L</span><span class="lm" style="left:115px">M</span></div></div>
  <div class="trk" style="top:178.500px;height:51px"><div class="trkh"><b>Overlay</b><span class="lm" style="left:90px">L</span><span class="lm" style="left:115px">M</span></div></div>
  <div class="abs" style="left:0;top:229px;width:985px;height:10px;background:#111a32;border-top:1px solid rgba(120,150,200,.13)"></div>
  <div class="abs" style="left:7px;top:231.500px;width:675px;height:5px;border-radius:2.500px;background:#2c3c5b"></div>

  <!-- video clip -->
  <div class="abs" style="left:146px;top:82px;width:421px;height:42px;border-radius:6px;border:1.500px solid #5c8cf0;overflow:hidden;background:#8cbbe2">
    <svg width="420" height="40" viewBox="0 -1.500 420 40">
      <defs>
        <linearGradient id="tsky" x1="0" y1="0" x2="0" y2="1"><stop offset="0" stop-color="#8cbbe2"/><stop offset="1" stop-color="#d2e2ea"/></linearGradient>
        <g id="th">
          <rect width="42.500" height="26" fill="url(#tsky)"/>
          <rect y="23.500" width="42.500" height="4" fill="#b3b1ba"/>
          <rect y="26.500" width="42.500" height="14" fill="#c6a367"/>
          <rect x="30" y="28" width="12.500" height="7" fill="#d8c08f" opacity=".8"/>
          <rect y="27" width="42.500" height="2" fill="#a8985e" opacity=".7"/>
          <rect y="36.500" width="42.500" height="4" fill="#86705a"/>
          <rect x="15" y="22.800" width="11" height="1.200" fill="#3b3a3a"/>
          <path d="M13.500 25 15 24h12.500l1.500 1.500v3.500h-15.500z" fill="#3a3127"/>
          <path d="M20 25h2v4h-2z" fill="#d2951f"/>
          <path d="M6.500 29.500 13.500 28.500h21l1 1.500v4l-1 1H7.500l-1.500-1z" fill="#d2951f"/>
          <rect x="35" y="26.500" width="2.300" height="6.500" rx="1" fill="#3a3430"/>
          <rect x="6" y="32.500" width="3" height="2.500" fill="#2c2a2c"/>
          <circle cx="11.500" cy="35" r="2.700" fill="#262326"/><circle cx="11.500" cy="35" r="1.100" fill="#a9adb4"/>
          <circle cx="30" cy="35" r="2.700" fill="#262326"/><circle cx="30" cy="35" r="1.100" fill="#a9adb4"/>
          <rect x="42" width=".6" height="40" fill="#ffffff" opacity=".18"/>
        </g>
      </defs>
      <use href="#th" x="0.0"/><use href="#th" x="42.1"/><use href="#th" x="84.2"/><use href="#th" x="126.3"/><use href="#th" x="168.4"/><use href="#th" x="210.5"/><use href="#th" x="252.6"/><use href="#th" x="294.7"/><use href="#th" x="336.8"/><use href="#th" x="378.9"/>
    </svg>
  </div>
  <!-- audio clip -->
  <div class="abs" style="left:147px;top:132px;width:498px;height:42px;border-radius:5px;background:linear-gradient(180deg,#1da44d,#168d3f);border:1px solid #1a8c41">
    <span class="abs" style="left:0;top:2px;font-size:14.4px;font-weight:400;color:#fff;white-space:nowrap">file_example_WAV_1MG.wav</span>
  </div>
  <!-- overlay clip -->
  <div class="abs" style="left:265px;top:181px;width:256px;height:46px;border-radius:7px;border:2px solid #7b9cf7;background:linear-gradient(180deg,#7c38ea,#6a2ad6);overflow:hidden">
    <div class="abs" style="left:0;top:0;width:7px;height:100%;background:#a27bee"></div>
    <div class="abs" style="right:0;top:0;width:7px;height:100%;background:#a27bee"></div>
    <span class="abs" style="left:9px;top:15px;font-size:11.5px;color:#fff">T</span>
    <span class="abs" style="left:22px;top:15px;font-size:11.5px;color:#fff;white-space:nowrap">Sample text</span>
  </div>
  <!-- markers -->
  <div class="abs" style="left:285px;top:77px;width:2px;height:153px;background:#1fd158"></div>
  <div class="abs" style="left:427.5px;top:77px;width:2px;height:153px;background:#e5484d"></div>
  <div class="abs" style="left:506.5px;top:77px;width:1.500px;height:153px;background:#f5d24a"></div>
  <div class="abs" style="left:502px;top:71.5px;width:10.500px;height:10.500px;background:#f6d550;transform:rotate(45deg);border-radius:1.500px"></div>
  <div class="abs" style="left:197.5px;top:62px;width:1.500px;height:16px;background:#e08a1e"></div>
  <div class="abs" style="left:194px;top:55px;width:9px;height:9px;border-radius:50%;background:#1a1408;border:2px solid #f59e0b"></div>
  <div class="abs" style="left:197px;top:58px;width:3px;height:3px;border-radius:50%;background:#f59e0b"></div>
</div>

</body>
</html>
